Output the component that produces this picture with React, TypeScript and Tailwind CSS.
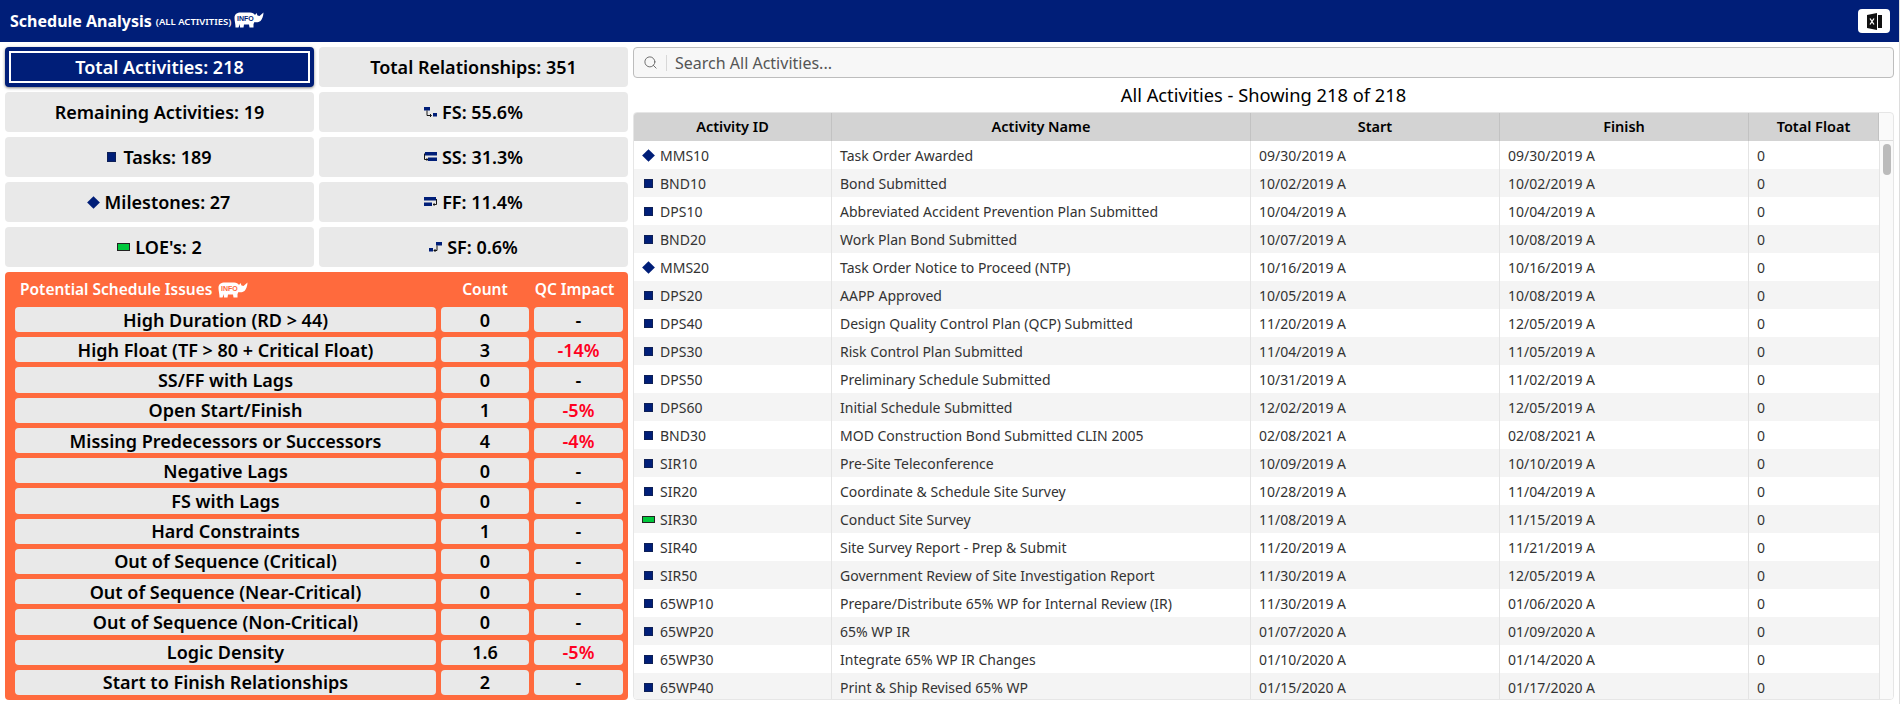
import { Search } from 'lucide-react';

const FONT = "font-['Noto_Sans',sans-serif]";

const ISSUES = [
  { label: 'High Duration (RD > 44)', count: '0', impact: '-' },
  { label: 'High Float (TF > 80 + Critical Float)', count: '3', impact: '-14%' },
  { label: 'SS/FF with Lags', count: '0', impact: '-' },
  { label: 'Open Start/Finish', count: '1', impact: '-5%' },
  { label: 'Missing Predecessors or Successors', count: '4', impact: '-4%' },
  { label: 'Negative Lags', count: '0', impact: '-' },
  { label: 'FS with Lags', count: '0', impact: '-' },
  { label: 'Hard Constraints', count: '1', impact: '-' },
  { label: 'Out of Sequence (Critical)', count: '0', impact: '-' },
  { label: 'Out of Sequence (Near-Critical)', count: '0', impact: '-' },
  { label: 'Out of Sequence (Non-Critical)', count: '0', impact: '-' },
  { label: 'Logic Density', count: '1.6', impact: '-5%' },
  { label: 'Start to Finish Relationships', count: '2', impact: '-' },
];

type Kind = 'task' | 'ms' | 'loe';

const ROWS: [Kind, string, string, string, string][] = [
  ['ms', 'MMS10', 'Task Order Awarded', '09/30/2019 A', '09/30/2019 A'],
  ['task', 'BND10', 'Bond Submitted', '10/02/2019 A', '10/02/2019 A'],
  ['task', 'DPS10', 'Abbreviated Accident Prevention Plan Submitted', '10/04/2019 A', '10/04/2019 A'],
  ['task', 'BND20', 'Work Plan Bond Submitted', '10/07/2019 A', '10/08/2019 A'],
  ['ms', 'MMS20', 'Task Order Notice to Proceed (NTP)', '10/16/2019 A', '10/16/2019 A'],
  ['task', 'DPS20', 'AAPP Approved', '10/05/2019 A', '10/08/2019 A'],
  ['task', 'DPS40', 'Design Quality Control Plan (QCP) Submitted', '11/20/2019 A', '12/05/2019 A'],
  ['task', 'DPS30', 'Risk Control Plan Submitted', '11/04/2019 A', '11/05/2019 A'],
  ['task', 'DPS50', 'Preliminary Schedule Submitted', '10/31/2019 A', '11/02/2019 A'],
  ['task', 'DPS60', 'Initial Schedule Submitted', '12/02/2019 A', '12/05/2019 A'],
  ['task', 'BND30', 'MOD Construction Bond Submitted CLIN 2005', '02/08/2021 A', '02/08/2021 A'],
  ['task', 'SIR10', 'Pre-Site Teleconference', '10/09/2019 A', '10/10/2019 A'],
  ['task', 'SIR20', 'Coordinate & Schedule Site Survey', '10/28/2019 A', '11/04/2019 A'],
  ['loe', 'SIR30', 'Conduct Site Survey', '11/08/2019 A', '11/15/2019 A'],
  ['task', 'SIR40', 'Site Survey Report - Prep & Submit', '11/20/2019 A', '11/21/2019 A'],
  ['task', 'SIR50', 'Government Review of Site Investigation Report', '11/30/2019 A', '12/05/2019 A'],
  ['task', '65WP10', 'Prepare/Distribute 65% WP for Internal Review (IR)', '11/30/2019 A', '01/06/2020 A'],
  ['task', '65WP20', '65% WP IR', '01/07/2020 A', '01/09/2020 A'],
  ['task', '65WP30', 'Integrate 65% WP IR Changes', '01/10/2020 A', '01/14/2020 A'],
  ['task', '65WP40', 'Print & Ship Revised 65% WP', '01/15/2020 A', '01/17/2020 A'],
];

function Rhino({ ink }: { ink: string }) {
  return (
    <svg width="30" height="16" viewBox="0 0 30 16" className="shrink-0" fill="#fff">
      <path d="M0.5 6 C0.5 2 3 0.5 7 0.5 L16 0.5 C18.5 0.5 20 1.5 21 3 L22.5 1 L23.5 3.5 L25.5 4 L29.5 0.5 C29.5 4 28 7.5 26.5 9 C24.5 10.5 22 10.5 20.5 10 L19.5 12 L19.5 15.5 L15.5 15.5 L15 12.5 L10 12.5 L9.5 15.5 L6 15.5 L6 12 L4.5 15.5 L1.5 15.5 C1.5 12 0.5 9 0.5 6 Z" />
      <text x="3" y="8.5" fontSize="7" fontWeight="800" fill={ink} fontFamily="Liberation Sans, sans-serif">INFO</text>
    </svg>
  );
}

function TypeIcon({ kind }: { kind: Kind }) {
  if (kind === 'ms') return <span className="block w-[9px] h-[9px] rotate-45 bg-[#001e78]" />;
  if (kind === 'loe') return <span className="block w-[13px] h-[7px] bg-[#00c83c] border border-[#222]" />;
  return <span className="block w-[9px] h-[9px] bg-[#001e78] border border-[#222]/40" />;
}

function RelIcon({ type }: { type: 'FS' | 'SS' | 'FF' | 'SF' }) {
  const paths = {
    FS: <><rect x="0" y="0" width="6" height="3.5" /><rect x="9" y="6" width="4" height="3.5" /><path d="M3 3.5v5h4M6 7l1.5 1.5L6 10" fill="none" stroke="#000" strokeWidth="0.9" /></>,
    SS: <><rect x="1" y="0" width="12" height="3.5" /><rect x="4" y="5.5" width="9" height="3.5" /><path d="M0.5 1.5v6h3M2.5 6.5l1.5 1-1.5 1" fill="none" stroke="#000" strokeWidth="0.9" /></>,
    FF: <><rect x="0" y="0" width="12" height="3.5" /><rect x="0" y="5.5" width="8" height="3.5" /><path d="M12.5 2v5.5h-3M10.5 6.5l-1.5 1 1.5 1" fill="none" stroke="#000" strokeWidth="0.9" /></>,
    SF: <><rect x="7" y="0" width="6" height="3.5" /><rect x="0" y="6" width="4" height="3.5" /><path d="M8 3.5v5h-3M6.5 7l-1.5 1.5L6.5 10" fill="none" stroke="#000" strokeWidth="0.9" /></>,
  };
  return <svg width="13" height="10" viewBox="0 0 13 10" fill="#001e78" className="shrink-0">{paths[type]}</svg>;
}

function ExcelIcon() {
  return (
    <svg width="15" height="17" viewBox="0 0 15 17">
      <path d="M0 2 L10 0 V17 L0 15 Z" fill="#111" />
      <rect x="11" y="2" width="4" height="13" fill="#111" />
      <path d="M3 5.5 L7 11.5 M7 5.5 L3 11.5" stroke="#fff" strokeWidth="1.3" />
    </svg>
  );
}

function Tile({ children, active, gap = 'gap-[5px]' }: { children: React.ReactNode; active?: boolean; gap?: string }) {
  if (active) {
    return (
      <div className="h-10 rounded bg-[#001e78] p-1 shadow-[0_1px_3px_rgba(0,0,0,0.5)]">
        <div className="h-full border-2 border-white flex items-center justify-center text-white text-[18px] font-semibold">
          {children}
        </div>
      </div>
    );
  }
  return (
    <div className={`h-10 rounded bg-[#e9e9e9] flex items-center justify-center ${gap} text-black text-[18px] font-semibold`}>
      {children}
    </div>
  );
}

const Cell = ({ children, className = 'text-black' }: { children: React.ReactNode; className?: string }) => (
  <div className={`rounded bg-[#e9e9e9] flex items-center justify-center text-[18px] leading-none font-semibold ${className}`}>
    {children}
  </div>
);

const GRID = 'grid-cols-[198px_419px_249px_249px_130px_1fr]';

export default function App() {
  return (
    <div className={`w-[1900px] h-[704px] overflow-hidden bg-white flex flex-col border-r border-[#dddddd] ${FONT}`}>
      <header className="h-[42px] shrink-0 bg-[#001e78] flex items-center justify-between pl-[10px] pr-[9px]">
        <div className="flex items-center text-white">
          <span className="text-[16px] font-bold">Schedule Analysis</span>
          <span className="text-[9.5px] font-semibold ml-1 mt-[2px]">(ALL ACTIVITIES)</span>
          <span className="ml-[3px] -mt-[3px]"><Rhino ink="#001e78" /></span>
        </div>
        <button className="w-8 h-6 bg-white rounded flex items-center justify-center"><ExcelIcon /></button>
      </header>

      <div className="flex-1 min-h-0 flex pt-[5px] pb-1 pl-[5px] pr-[5px] gap-[5px]">
        <div className="w-[623px] shrink-0 flex flex-col gap-[5px]">
          <div className="grid grid-cols-2 gap-[5px]">
            <Tile active>Total Activities: 218</Tile>
            <Tile>Total Relationships: 351</Tile>
            <Tile>Remaining Activities: 19</Tile>
            <Tile><RelIcon type="FS" />FS: 55.6%</Tile>
            <Tile gap="gap-[7px]"><span className="block w-[9px] h-[10px] bg-[#001e78] border border-[#222]/40" />Tasks: 189</Tile>
            <Tile><RelIcon type="SS" />SS: 31.3%</Tile>
            <Tile gap="gap-[7px]"><span className="block w-[9px] h-[9px] rotate-45 bg-[#001e78]" />Milestones: 27</Tile>
            <Tile><RelIcon type="FF" />FF: 11.4%</Tile>
            <Tile><span className="block w-[13px] h-[8px] bg-[#00c83c] border border-[#222]" />LOE's: 2</Tile>
            <Tile><RelIcon type="SF" />SF: 0.6%</Tile>
          </div>

          <div className="flex-1 min-h-0 rounded bg-[#ff6a3d] px-[10px] pb-[5px] flex flex-col">
            <div className="h-[35px] shrink-0 grid grid-cols-[421px_88px_89px] gap-[5px] items-center text-white text-[15.5px] font-semibold">
              <div className="flex items-center pl-[5px] gap-[6px]">Potential Schedule Issues <Rhino ink="#ff6a3d" /></div>
              <div className="text-center">Count</div>
              <div className="text-center -ml-2 whitespace-nowrap">QC Impact</div>
            </div>
            <div className="flex-1 min-h-0 grid grid-rows-[repeat(13,1fr)] gap-[5px]">
              {ISSUES.map(i => (
                <div key={i.label} className="grid grid-cols-[421px_88px_89px] gap-[5px] min-h-0">
                  <Cell>{i.label}</Cell>
                  <Cell>{i.count}</Cell>
                  <Cell className={i.impact === '-' ? 'text-black' : 'text-[#ff0022]'}>{i.impact}</Cell>
                </div>
              ))}
            </div>
          </div>
        </div>

        <div className="flex-1 min-w-0 flex flex-col">
          <div className="h-[31px] shrink-0 rounded border border-[#bdbdbd] bg-[#f7f7f7] flex items-center">
            <Search size={15} strokeWidth={1.5} className="ml-[9px] text-[#666]" />
            <span className="w-px h-4 bg-[#d8d8d8] ml-2" />
            <span className="ml-2 text-[16px] text-[#555]">Search All Activities...</span>
          </div>
          <div className="h-[34px] shrink-0 flex items-center justify-center text-[18.3px] text-black">
            All Activities - Showing 218 of 218
          </div>
          <div className="flex-1 min-h-0 rounded border border-[#e6e6e6] overflow-hidden relative">
            <div className={`grid ${GRID} h-7 bg-[#d3d3d3] text-[14.5px] font-semibold text-black`}>
              {['Activity ID', 'Activity Name', 'Start', 'Finish', 'Total Float'].map(h => (
                <div key={h} className="flex items-center justify-center border-r border-[#c2c2c2]">{h}</div>
              ))}
              <div className="bg-[#fafafa] border-b border-[#dddddd]" />
            </div>
            {ROWS.map(([kind, id, name, start, finish], idx) => (
              <div key={id} className={`grid ${GRID} h-7 text-[14px] text-[#333] ${idx % 2 ? 'bg-[#f4f4f4]' : 'bg-white'}`}>
                <div className="flex items-center border-r border-[#e4e4e4] pl-2 gap-[5px]">
                  <span className="w-[13px] flex justify-center"><TypeIcon kind={kind} /></span>
                  {id}
                </div>
                <div className="flex items-center border-r border-[#e4e4e4] pl-2">{name}</div>
                <div className="flex items-center border-r border-[#e4e4e4] pl-2">{start}</div>
                <div className="flex items-center border-r border-[#e4e4e4] pl-2">{finish}</div>
                <div className="flex items-center pl-2">0</div>
                <div className="bg-[#fafafa] border-l border-[#e4e4e4]" />
              </div>
            ))}
            <div className="absolute right-[2px] top-[31px] w-2 h-[31px] rounded bg-[#bbbbbb]" />
          </div>
        </div>
      </div>
    </div>
  );
}
